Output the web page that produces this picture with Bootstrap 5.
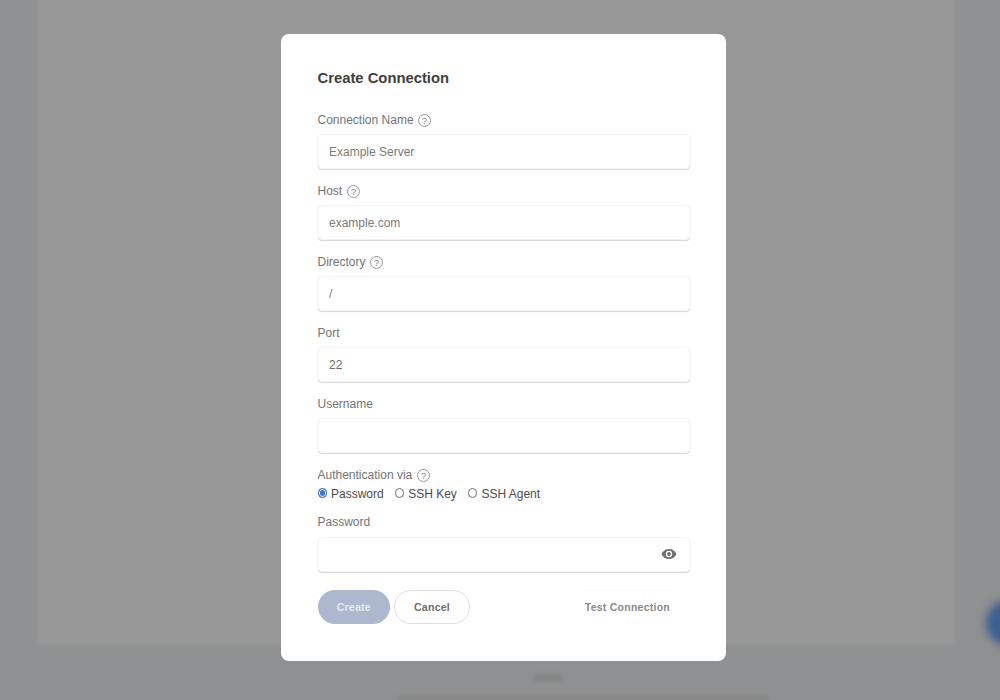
<!DOCTYPE html>
<html lang="en">
<head>
  <meta charset="UTF-8">
  <title>Create Connection</title>
  <link href="https://cdn.jsdelivr.net/npm/bootstrap@5.3.0/dist/css/bootstrap.min.css" rel="stylesheet">
  <style>
    html, body { height: 100%; }
    body {
      background: #8f9091;
      font-family: "Liberation Sans", Arial, sans-serif;
      overflow: hidden;
    }
    .page-bg {
      position: fixed;
      inset: 0;
      filter: blur(2px);
    }
    .page-panel {
      position: absolute;
      left: 37px;
      right: 45px;
      top: -10px;
      bottom: 55px;
      background: #989898;
    }
    .page-fab {
      position: absolute;
      left: 986px;
      top: 600px;
      width: 46px;
      height: 46px;
      border-radius: 50%;
      background: #3b5f90;
      filter: blur(4px);
    }
    .page-tab {
      position: absolute;
      left: 534px;
      top: 674px;
      width: 28px;
      height: 8px;
      background: #848585;
    }
    .page-tabbar {
      position: absolute;
      left: 398px;
      top: 696px;
      width: 370px;
      height: 6px;
      background: #868787;
    }
    .conn-wrap {
      position: fixed;
      inset: 0;
    }
    .conn-modal {
      width: 445px;
      height: 627px;
      margin-top: 34px;
      margin-left: 281px;
      padding: 34px 36px 0 36.5px;
      background: #fff;
      border-radius: 8px;
    }
    .conn-title {
      font-size: 14.8px;
      font-weight: 700;
      line-height: 20px;
      color: #404040;
      margin: 0 0 22px;
    }
    .conn-label {
      display: flex;
      align-items: center;
      gap: 4.5px;
      font-size: 12px;
      line-height: 20px;
      height: 20px;
      color: #747474;
      margin-bottom: 4px;
    }
    .conn-field { margin-bottom: 12px; }
    .conn-input {
      height: 35px;
      width: 100%;
      border: 1px solid #f4f4f4;
      border-radius: 4px;
      box-shadow: 0 1px 1px rgba(0, 0, 0, .16);
      font-size: 12px;
      color: #6e6e6e;
      padding: 0 10.5px;
      outline: 0;
    }
    .conn-input::placeholder { color: #7c7c7c; opacity: 1; }
    .conn-help { width: 13px; height: 13px; flex: none; }
    .conn-radios {
      display: flex;
      align-items: center;
      gap: 11px;
      height: 18px;
      margin-top: -4px;
      margin-bottom: 9px;
      font-size: 12px;
      color: #4c4c4c;
    }
    .conn-radio { display: flex; align-items: center; gap: 4px; }
    .conn-dot {
      width: 9.5px;
      height: 9.5px;
      border: 1px solid #707070;
      border-radius: 50%;
      margin-top: -2px;
    }
    .conn-dot-on {
      border-color: #2f66d0;
      background: #3f73dc;
      box-shadow: inset 0 0 0 1px #fff;
    }
    .conn-field-pass .conn-label { margin-bottom: 5px; }
    .conn-pass { position: relative; }
    .conn-eye {
      position: absolute;
      right: 13px;
      top: 11px;
      width: 16px;
      height: 12px;
    }
    .conn-actions { margin-top: 18px; }
    .conn-btn {
      height: 34px;
      border-radius: 17px;
      font-size: 10.6px;
      font-weight: 700;
      padding: 1px 0 0;
      letter-spacing: .2px;
    }
    .conn-create {
      width: 72.5px;
      background: #adb8ce;
      border: 0;
      color: #e6e9ef;
    }
    .conn-cancel {
      width: 76px;
      background: #fff;
      border: 1px solid #e0e0e0;
      color: #6e6e6e;
    }
    .conn-test {
      display: flex;
      align-items: center;
      height: 34px;
      padding: 0 3px;
      border-top: 1px solid #fafafa;
      font-size: 10.5px;
      font-weight: 700;
      letter-spacing: .25px;
      color: #8a8a8a;
      margin-right: 17px;
    }
  </style>
</head>
<body>
  <div class="page-bg">
    <div class="page-panel"></div>
    <div class="page-tab"></div>
    <div class="page-tabbar"></div>
  </div>
  <div class="page-fab"></div>

  <div class="conn-wrap">
    <form class="conn-modal">
      <h5 class="conn-title">Create Connection</h5>

      <div class="conn-field">
        <div class="conn-label">Connection Name
          <svg class="conn-help" viewBox="0 0 13 13"><circle cx="6.5" cy="6.5" r="6" fill="none" stroke="#999"/><text x="6.5" y="9.5" font-size="9" text-anchor="middle" fill="#808080" font-family="Liberation Sans">?</text></svg>
        </div>
        <input class="conn-input" placeholder="Example Server">
      </div>
      <div class="conn-field">
        <div class="conn-label">Host
          <svg class="conn-help" viewBox="0 0 13 13"><circle cx="6.5" cy="6.5" r="6" fill="none" stroke="#999"/><text x="6.5" y="9.5" font-size="9" text-anchor="middle" fill="#808080" font-family="Liberation Sans">?</text></svg>
        </div>
        <input class="conn-input" placeholder="example.com">
      </div>
      <div class="conn-field">
        <div class="conn-label">Directory
          <svg class="conn-help" viewBox="0 0 13 13"><circle cx="6.5" cy="6.5" r="6" fill="none" stroke="#999"/><text x="6.5" y="9.5" font-size="9" text-anchor="middle" fill="#808080" font-family="Liberation Sans">?</text></svg>
        </div>
        <input class="conn-input" placeholder="/">
      </div>
      <div class="conn-field">
        <div class="conn-label">Port</div>
        <input class="conn-input" value="22">
      </div>
      <div class="conn-field">
        <div class="conn-label">Username</div>
        <input class="conn-input">
      </div>

      <div class="conn-label">Authentication via
        <svg class="conn-help" viewBox="0 0 13 13"><circle cx="6.5" cy="6.5" r="6" fill="none" stroke="#999"/><text x="6.5" y="9.5" font-size="9" text-anchor="middle" fill="#808080" font-family="Liberation Sans">?</text></svg>
      </div>
      <div class="conn-radios">
        <div class="conn-radio"><span class="conn-dot conn-dot-on"></span>Password</div>
        <div class="conn-radio"><span class="conn-dot"></span>SSH Key</div>
        <div class="conn-radio"><span class="conn-dot"></span>SSH Agent</div>
      </div>

      <div class="conn-field-pass">
        <div class="conn-label">Password</div>
        <div class="conn-pass">
          <input class="conn-input">
          <svg class="conn-eye" viewBox="0 0 16 12"><path fill="#6f6f6f" fill-rule="evenodd" d="M8 1C4.600 1 1.700 3 .5 6c1.200 3 4.100 5 7.500 5s6.300-2 7.500-5C14.300 3 11.400 1 8 1zm0 8.200A3.200 3.200 0 1 1 8 2.800a3.200 3.200 0 0 1 0 6.400z"/><circle cx="8" cy="6" r="1.900" fill="#6f6f6f"/></svg>
        </div>
      </div>

      <div class="d-flex align-items-center justify-content-between conn-actions">
        <div class="d-flex gap-1">
          <button type="button" class="btn conn-btn conn-create">Create</button>
          <button type="button" class="btn conn-btn conn-cancel">Cancel</button>
        </div>
        <span class="conn-test">Test Connection</span>
      </div>
    </form>
  </div>

  <script src="https://cdn.jsdelivr.net/npm/bootstrap@5.3.0/dist/js/bootstrap.bundle.min.js"></script>
</body>
</html>
